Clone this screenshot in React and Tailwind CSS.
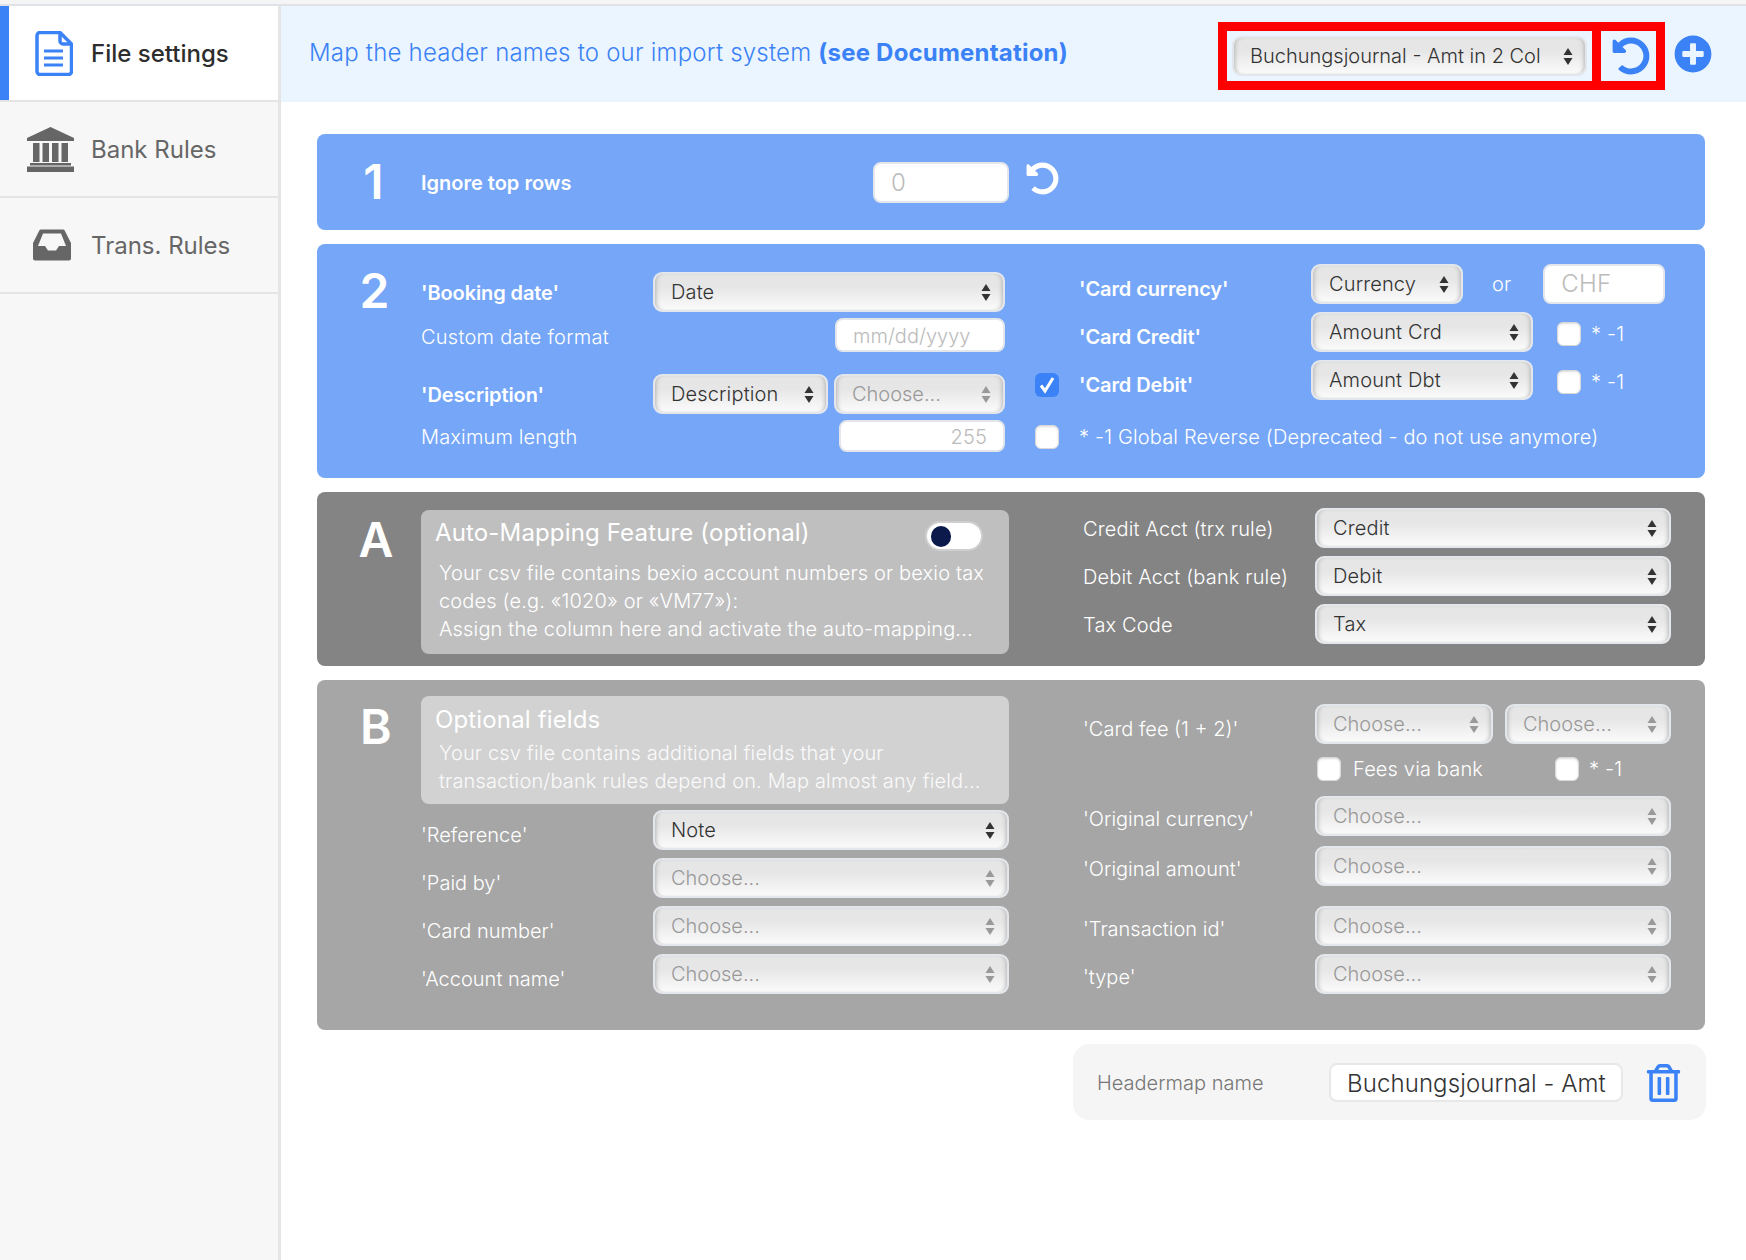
import { FaUndoAlt, FaPlusCircle, FaRegTrashAlt } from 'react-icons/fa';

const FileIcon = () => (
  <svg width="38" height="45" viewBox="0 0 38 45" fill="none" stroke="#3b82f6" strokeWidth="3.5">
    <path d="M5 1.5H25L36.5 13V40.5a3 3 0 0 1-3 3H5a3 3 0 0 1-3-3V4.500a3 3 0 0 1 3-3Z" strokeLinejoin="round" />
    <path d="M25 1.500V10a3 3 0 0 0 3 3h8.500" />
    <path d="M9 20H28M9 27H28M9 34H28" strokeWidth="3" />
  </svg>
);

const BankIcon = () => (
  <svg width="47" height="45" viewBox="0 0 47 45" fill="#666">
    <path d="M23.500 0L47 11V14H0V11Z" />
    <path d="M6 16h6.500v19H6zM15.500 16H22v19h-6.500zM25 16h6.500v19H25zM34.500 16H41v19h-6.500z" />
    <path d="M3 36h41v2.500H3zM0 39.500h47V45H0z" />
  </svg>
);

const InboxIcon = () => (
  <svg width="38" height="32" viewBox="0 0 38 32" fill="#666">
    <path
      fillRule="evenodd"
      d="M8 .5H30a2 2 0 0 1 1.800 1.200L38 14V29.500a2 2 0 0 1-2 2H2a2 2 0 0 1-2-2V14L6.200 1.700A2 2 0 0 1 8 .5ZM10 4.500L5 17H12L15 21.500H23L26 17H33L28 4.500Z"
    />
  </svg>
);

const Arrows = ({ muted }) => (
  <svg width="10" height="17" viewBox="0 0 10 17" fill={muted ? '#999' : '#333'}>
    <path d="M5 0L9.500 7H.5Z" />
    <path d="M.5 10H9.500L5 17Z" />
  </svg>
);

const Select = ({ value, plain, className = 'w-full' }) => {
  const muted = value === 'Choose...';
  return (
    <div
      className={`flex h-10 shrink-0 items-center justify-between rounded-[9px] border-2 border-[#e3e6ea] bg-linear-to-b from-[#e6e6e6] from-35% to-[#fbfbfb] pl-4 pr-3 text-xl font-light shadow-[inset_4px_0_4px_-3px_#b5b5b5,inset_-4px_0_4px_-3px_#b5b5b5] ${className} ${muted ? 'text-[#999]' : 'text-[#333]'} ${muted || plain ? 'tracking-normal' : 'tracking-[0.15px]'}`}
    >
      <span className="whitespace-nowrap">{value}</span>
      <Arrows muted={muted} />
    </div>
  );
};

const Checkbox = ({ checked }) =>
  checked ? (
    <div className="flex size-6 shrink-0 items-center justify-center rounded-md bg-[#3b82f6]">
      <svg width="18" height="18" viewBox="0 0 18 18" fill="none" stroke="#fff" strokeWidth="3">
        <path d="M3 9.500L7 15L15 2" />
      </svg>
    </div>
  ) : (
    <div className="size-6 shrink-0 rounded-md border border-[#d9d9d9] bg-white shadow-[inset_0_1px_2px_#ddd]" />
  );

const TextBox = ({ value, className = '' }) => (
  <div className={`flex shrink-0 items-center rounded-lg border-2 border-[#e3e6ea] bg-white px-4 text-[#bbb] ${className}`}>
    {value}
  </div>
);

const Num = ({ children, className = 'mt-[23px] pl-[11px]' }) => (
  <div className={`w-[104px] shrink-0 text-center text-5xl leading-none font-semibold text-white ${className}`}>
    {children}
  </div>
);

// label column plus a select, the label sits a little lower than the control
const Row = ({ label, bold, value, offset = 'pt-[10px] tracking-normal', width = 'w-[232px]', className = '' }) => (
  <div className={`flex items-center ${className}`}>
    <div className={`${width} shrink-0 text-white ${bold ? 'font-semibold tracking-[-0.1px]' : ''} ${offset}`}>{label}</div>
    <Select value={value} className="flex-1" />
  </div>
);

const NavItem = ({ icon, label, active, iconClass }) => (
  <div
    className={`flex h-24 items-center border-b-2 border-[#e5e5e5] tracking-normal ${active ? 'bg-white text-[#2d2d2d] font-medium' : 'text-[#666]'}`}
  >
    {active && <div className="h-full w-[9px] bg-[#3b82f6]" />}
    <div className={`flex shrink-0 ${active ? 'w-[82px]' : 'w-[91px]'} ${iconClass}`}>{icon}</div>
    <span className="pt-0.5 text-2xl">{label}</span>
  </div>
);

export default function App() {
  return (
    <div className="flex h-[1260px] w-full flex-col overflow-hidden bg-white text-xl font-light tracking-[0.15px] text-white [font-family:Inter,sans-serif]">
      <div className="h-1 bg-[#f5f5f5]" />
      <div className="h-0.5 bg-[#dfe3e8]" />
      <div className="flex flex-1">
        {/* Sidebar */}
        <aside className="w-[281px] shrink-0 border-r-[3px] border-[#e5e5e5] bg-[#f7f7f7] font-normal">
          <NavItem active icon={<FileIcon />} label="File settings" iconClass="pl-[26px]" />
          <NavItem icon={<BankIcon />} label="Bank Rules" iconClass="pl-[27px]" />
          <NavItem icon={<InboxIcon />} label="Trans. Rules" iconClass="pl-[33px]" />
        </aside>

        <main className="flex-1">
          {/* Header */}
          <div className="flex h-24 items-center justify-between bg-[#ebf5ff] pl-[28px] pr-[34px]">
            <p className="mb-0.5 text-2xl tracking-[0.2px] text-[#3b82f6]">
              Map the header names to our import system <span className="font-bold">(see Documentation)</span>
            </p>
            <div className="flex items-center gap-[9px]">
              <div className="mt-1 flex items-center border-[9px] border-[#ff0000]">
                <div className="px-[5px] py-[5px]">
                  <Select plain value="Buchungsjournal - Amt in 2 Col" className="w-[355px]" />
                </div>
                <div className="box-content flex h-[50px] w-[51px] items-center justify-center border-l-[9px] border-[#ff0000] pl-1">
                  <FaUndoAlt className="size-[38px] text-[#3b82f6]" />
                </div>
              </div>
              <FaPlusCircle className="size-[38px] text-[#3b82f6]" />
            </div>
          </div>

          <div className="mt-8 flex flex-col gap-3.5 pl-9 pr-[41px]">
            {/* Card 1 */}
            <section className="flex h-24 rounded-lg bg-[#75a6f8]">
              <Num className="mt-6 pl-[9px]">1</Num>
              <div className="flex h-full items-center">
                <div className="w-[452px] pt-0.5 font-semibold tracking-normal">Ignore top rows</div>
                <TextBox value="0" className="h-[41px] w-[136px] pt-px text-2xl" />
                <FaUndoAlt className="mb-[7px] ml-[17px] size-[33px] text-white" />
              </div>
            </section>

            {/* Card 2 */}
            <section className="flex h-[234px] rounded-lg bg-[#75a6f8]">
              <Num>2</Num>
              <div className="w-[584px] shrink-0 pt-7">
                <Row bold label="'Booking date'" value="Date" offset="pt-0.5" />
                <div className="mt-1.5 flex items-center justify-between">
                  <div className="pt-1 tracking-[0.25px]">Custom date format</div>
                  <TextBox value="mm/dd/yyyy" className="h-[34px] w-[170px] pt-0.5 tracking-normal" />
                </div>
                <div className="mt-[22px] flex items-center">
                  <div className="w-[232px] shrink-0 pt-0.5 font-semibold tracking-[-0.1px]">'Description'</div>
                  <Select value="Description" className="w-[175px]" />
                  <Select value="Choose..." className="ml-1.5 flex-1" />
                </div>
                <div className="mt-1.5 flex items-center justify-between">
                  <div className="pt-0.5">Maximum length</div>
                  <TextBox value="255" className="h-8 w-[166px] justify-end pt-0.5" />
                </div>
              </div>
              <div className="flex-1 pl-[30px] pt-5">
                <div className="flex items-center pl-[44px]">
                  <div className="w-[232px] shrink-0 pt-[10px] font-semibold tracking-[-0.1px]">'Card currency'</div>
                  <Select value="Currency" className="w-[152px]" />
                  <span className="ml-[29px] mr-[32px]">or</span>
                  <TextBox value="CHF" className="h-10 w-[122px] text-2xl" />
                </div>
                <div className="mt-2 flex items-center pl-[44px]">
                  <div className="w-[232px] shrink-0 pt-[10px] font-semibold tracking-[-0.1px]">'Card Credit'</div>
                  <Select value="Amount Crd" className="w-[222px]" />
                  <div className="ml-6 mt-1 flex items-center gap-2.5">
                    <Checkbox />
                    <span>* -1</span>
                  </div>
                </div>
                <div className="mt-2 flex items-center">
                  <div className="w-[44px] shrink-0 pt-[10px]">
                    <Checkbox checked />
                  </div>
                  <div className="w-[232px] shrink-0 pt-[10px] font-semibold tracking-[-0.1px]">'Card Debit'</div>
                  <Select value="Amount Dbt" className="w-[222px]" />
                  <div className="ml-6 mt-1 flex items-center gap-2.5">
                    <Checkbox />
                    <span>* -1</span>
                  </div>
                </div>
                <div className="mt-[23px] flex items-center">
                  <div className="w-[44px] shrink-0">
                    <Checkbox />
                  </div>
                  <span>* -1 Global Reverse (Deprecated - do not use anymore)</span>
                </div>
              </div>
            </section>

            {/* Card A */}
            <section className="flex h-[174px] rounded-lg bg-[#848484]">
              <Num className="mt-6 pl-[14px]">A</Num>
              <div className="mt-[18px] h-36 w-[588px] shrink-0 rounded-lg bg-[#bfbfbf] pl-[14px] pr-[26px] pt-[7px]">
                <div className="flex items-start justify-between">
                  <h3 className="text-2xl font-normal">Auto-Mapping Feature (optional)</h3>
                  <div className="mt-1 flex h-[30px] w-[58px] items-center rounded-full border-2 border-[#cfcfcf] bg-white pl-1">
                    <div className="h-[21px] w-5 rounded-full bg-[#0b1a4b]" />
                  </div>
                </div>
                <p className="mt-2 pl-1 text-xl leading-7 whitespace-nowrap text-white">
                  Your csv file contains bexio account numbers or bexio tax
                  <br />
                  codes (e.g. «1020» or «VM77»):
                  <br />
                  Assign the column here and activate the auto-mapping...
                </p>
              </div>
              <div className="flex flex-1 flex-col gap-2 pl-[74px] pr-[34px] pt-4">
                <Row label="Credit Acct (trx rule)" value="Credit" offset="pt-0.5" />
                <Row label="Debit Acct (bank rule)" value="Debit" offset="pt-0.5" />
                <Row label="Tax Code" value="Tax" offset="pt-0.5" />
              </div>
            </section>

            {/* Card B */}
            <section className="flex h-[350px] rounded-lg bg-[#a6a6a6]">
              <Num className="mt-[23px] pl-[14px]">B</Num>
              <div className="w-[588px] shrink-0 pt-4">
                <div className="h-[108px] rounded-lg bg-[#d2d2d2] pl-[14px] pt-2 text-white">
                  <h3 className="text-2xl font-normal">Optional fields</h3>
                  <p className="mt-[3px] pl-1 text-xl leading-7 whitespace-nowrap text-[#fafafa]">
                    Your csv file contains additional fields that your
                    <br />
                    transaction/bank rules depend on. Map almost any field...
                  </p>
                </div>
                <div className="mt-1.5 flex flex-col gap-2">
                  <Row label="'Reference'" value="Note" />
                  <Row label="'Paid by'" value="Choose..." />
                  <Row label="'Card number'" value="Choose..." />
                  <Row label="'Account name'" value="Choose..." />
                </div>
              </div>
              <div className="flex-1 pl-[74px] pr-[34px] pt-6">
                <div className="flex items-center">
                  <div className="w-[232px] shrink-0 pt-[10px] tracking-normal">'Card fee (1 + 2)'</div>
                  <Select value="Choose..." className="w-[178px]" />
                  <Select value="Choose..." className="ml-3 flex-1" />
                </div>
                <div className="mt-[11px] flex items-center pl-[234px]">
                  <Checkbox />
                  <span className="ml-3 w-[202px]">Fees via bank</span>
                  <Checkbox />
                  <span className="ml-2.5">* -1</span>
                </div>
                <Row className="mt-[13px]" label="'Original currency'" value="Choose..." offset="pt-1.5 tracking-normal" />
                <Row className="mt-2.5" label="'Original amount'" value="Choose..." offset="pt-1.5 tracking-normal" />
                <Row className="mt-5" label="'Transaction id'" value="Choose..." offset="pt-1.5 tracking-normal" />
                <Row className="mt-2" label="'type'" value="Choose..." offset="pt-1.5 tracking-normal" />
              </div>
            </section>

            {/* Footer */}
            <div className="-mr-px ml-auto flex h-[76px] w-[633px] items-center rounded-2xl bg-[#f5f5f5] pl-6 tracking-normal text-[#777]">
              <span className="w-[232px] shrink-0 pt-px">Headermap name</span>
              <div className="flex h-[39px] w-[294px] items-center rounded-lg border-2 border-[#e8e8e8] bg-white px-4 pt-1 text-2xl tracking-[0.1px] whitespace-nowrap text-[#333]">
                Buchungsjournal - Amt
              </div>
              <FaRegTrashAlt className="ml-[23px] mt-0.5 h-[38px] w-[35px] text-[#3b82f6]" />
            </div>
          </div>
        </main>
      </div>
    </div>
  );
}
